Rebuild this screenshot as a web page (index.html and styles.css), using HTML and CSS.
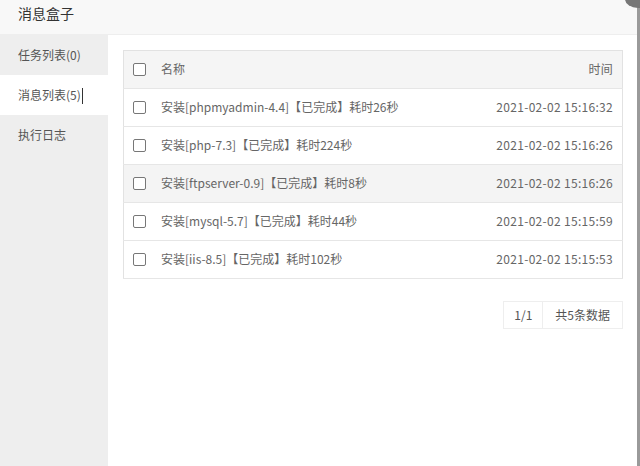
FILE: index.html
```html
<!DOCTYPE html>
<html lang="zh-CN">
<head>
    <meta charset="UTF-8">
    <meta name="viewport" content="width=device-width, initial-scale=1.0">
    <link rel="stylesheet" href="styles.css">
    <title>消息盒子</title>
</head>
<body>
    <div id="box">
        <div class="box-title">消息盒子</div>
        <span class="box-close"></span>
        <div class="box-body">
            <ul class="side-menu">
                <li>任务列表(0)</li>
                <li class="active">消息列表(5)<span class="caret"></span></li>
                <li>执行日志</li>
            </ul>

            <div class="main">
                <table class="msg-table">
                    <thead>
                        <tr>
                            <th class="chk"><span class="checkbox"></span></th>
                            <th>名称</th>
                            <th class="time">时间</th>
                        </tr>
                    </thead>
                    <tbody>
                        <tr>
                            <td class="chk"><span class="checkbox"></span></td>
                            <td>安装[phpmyadmin-4.4]【已完成】耗时26秒</td>
                            <td class="time">2021-02-02 15:16:32</td>
                        </tr>
                        <tr>
                            <td class="chk"><span class="checkbox"></span></td>
                            <td>安装[php-7.3]【已完成】耗时224秒</td>
                            <td class="time">2021-02-02 15:16:26</td>
                        </tr>
                        <tr class="hover">
                            <td class="chk"><span class="checkbox"></span></td>
                            <td>安装[ftpserver-0.9]【已完成】耗时8秒</td>
                            <td class="time">2021-02-02 15:16:26</td>
                        </tr>
                        <tr>
                            <td class="chk"><span class="checkbox"></span></td>
                            <td>安装[mysql-5.7]【已完成】耗时44秒</td>
                            <td class="time">2021-02-02 15:15:59</td>
                        </tr>
                        <tr>
                            <td class="chk"><span class="checkbox"></span></td>
                            <td>安装[iis-8.5]【已完成】耗时102秒</td>
                            <td class="time">2021-02-02 15:15:53</td>
                        </tr>
                    </tbody>
                </table>

                <div class="page">
                    <span>1/1</span>
                    <span>共5条数据</span>
                </div>
            </div>
        </div>
    </div>
</body>
</html>
```

FILE: styles.css
```css
body {
    margin: 0;
    font-family: "Noto Sans CJK SC", "Liberation Sans", sans-serif;
    background-color: #ffffff;
    width: 640px;
    height: 466px;
    overflow: hidden;
}

#box {
    position: relative;
    width: 637px;
    height: 466px;
    border-right: 3px solid #9a9a9a;
    display: flex;
    flex-direction: column;
}

.box-title {
    height: 34px;
    line-height: 27px;
    padding-left: 18px;
    font-size: 14px;
    color: #333333;
    background-color: #f8f8f8;
    border-bottom: 1px solid #eeeeee;
}

.box-close {
    position: absolute;
    top: -10px;
    right: -14px;
    width: 26px;
    height: 18px;
    border-radius: 50%;
    background-color: #777777;
}

.box-body {
    flex: 1;
    display: flex;
}

.side-menu {
    list-style: none;
    margin: 0;
    padding: 0;
    width: 108px;
    background-color: #eeeeee;
}

.side-menu li {
    height: 40px;
    line-height: 39px;
    padding-left: 18px;
    font-size: 12px;
    color: #555555;
}

.side-menu li.active {
    background-color: #ffffff;
}

.caret {
    display: inline-block;
    width: 1px;
    height: 16px;
    background-color: #333333;
    vertical-align: -4px;
    margin-left: 1px;
}

.main {
    flex: 1;
    padding: 15px 14px 0 15px;
}

.msg-table {
    width: 500px;
    border-collapse: collapse;
    border: 1px solid #e2e2e2;
    font-size: 12px;
    color: #666666;
}

.msg-table th,
.msg-table td {
    height: 34px;
    padding: 0 0 3px 0;
    text-align: left;
    font-weight: normal;
    border-bottom: 1px solid #e6e6e6;
}

.msg-table thead tr {
    background-color: #f5f5f5;
}

.msg-table tr.hover {
    background-color: #f4f4f4;
}

.msg-table .chk {
    width: 28px;
    padding: 0 0 0 9px;
}

.msg-table .time {
    text-align: right;
    padding-right: 9px;
    letter-spacing: 0.3px;
}

.checkbox {
    display: block;
    width: 11px;
    height: 11px;
    border: 1px solid #777777;
    border-radius: 2px;
    background-color: #ffffff;
}

.page {
    display: flex;
    justify-content: flex-end;
    margin-top: 22px;
    width: 500px;
}

.page span {
    height: 26px;
    line-height: 26px;
    padding: 0 10px;
    font-size: 12px;
    color: #555555;
    border: 1px solid #eeeeee;
}

.page span + span {
    border-left: none;
    padding: 0 12px;
}
```
